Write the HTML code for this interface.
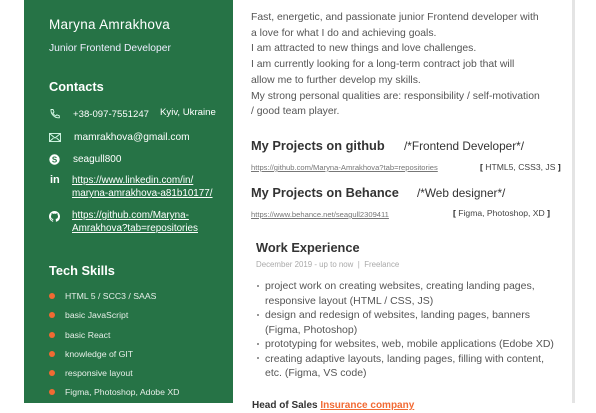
<!DOCTYPE html>
<html><head><meta charset="utf-8"><style>
*{margin:0;padding:0;box-sizing:border-box}
body{width:596px;height:403px;overflow:hidden;background:#fff;font-family:"Liberation Sans",sans-serif;position:relative}
.t{position:absolute;white-space:nowrap;line-height:14px}
.side{position:absolute;left:24px;top:0;width:209px;height:403px;background:#267346}
.w{color:#fff}
.g{color:#555;font-size:10.4px}
.dot{position:absolute;width:6px;height:6px;border-radius:50%;background:#f26a33}
.li{color:#e8efe9;font-size:8.7px}
.h{font-weight:bold;color:#333;font-size:12.8px}
.lk{font-size:7.6px;color:#777;text-decoration:underline}
.br{font-size:8.6px;color:#444}
.br b{color:#222}
.bul{color:#555;font-size:10.5px}
.bd{position:absolute;width:2px;height:2px;background:#777;border-radius:50%}
</style></head><body>
<div class="side"></div>
<div style="position:absolute;left:572px;top:0;width:3px;height:403px;background:#e4e4e4"></div>

<div class="t w" style="left:49px;top:18px;font-size:13.5px;letter-spacing:.3px">Maryna Amrakhova</div>
<div class="t w" style="left:49px;top:42px;font-size:10.3px;color:#eef">Junior Frontend Developer</div>
<div class="t w" style="left:49px;top:80px;font-size:12.8px;font-weight:bold">Contacts</div>

<svg style="position:absolute;left:49px;top:108px" width="12" height="12" viewBox="0 0 12 12" fill="none" stroke="#dfe" stroke-width="0.9"><path d="M2 1.5l2 0 1 2.5-1.2 1c.7 1.4 1.6 2.3 3 3l1-1.2 2.5 1v2c-4.5.5-8.8-3.8-8.3-8.3z"/></svg>
<div class="t w" style="left:73px;top:108px;font-size:9.6px">+38-097-7551247</div>
<div class="t w" style="left:160px;top:106px;font-size:9.6px">Kyiv, Ukraine</div>

<svg style="position:absolute;left:49px;top:133px" width="12" height="9" viewBox="0 0 12 9" fill="none" stroke="#dfe" stroke-width="0.9"><rect x="0.5" y="0.5" width="11" height="8"/><path d="M.5 .5l5.5 4.5 5.5-4.5M.5 8.5l4-3.5M11.5 8.5l-4-3.5"/></svg>
<div class="t w" style="left:74px;top:131px;font-size:10.2px">mamrakhova@gmail.com</div>

<svg style="position:absolute;left:49px;top:154px" width="11" height="11" viewBox="0 0 11 11"><circle cx="5.5" cy="5.5" r="5.2" fill="#fff"/><text x="5.5" y="8.3" font-size="8" font-weight="bold" fill="#267346" text-anchor="middle" font-family="Liberation Sans">S</text></svg>
<div class="t w" style="left:73px;top:153px;font-size:10px">seagull800</div>

<div class="t w" style="left:50px;top:173px;font-size:11px;font-weight:bold">in</div>
<div class="t w" style="left:72px;top:174px;font-size:9.9px;text-decoration:underline;line-height:13px">https://www.linkedin.com/in/<br>maryna-amrakhova-a81b10177/</div>

<svg style="position:absolute;left:49px;top:211px" width="11" height="11" viewBox="0 0 16 16"><path fill="#fff" d="M8 0C3.580 0 0 3.58 0 8c0 3.54 2.29 6.53 5.47 7.59.4.07.55-.17.55-.38v-1.33c-2.23.48-2.7-1.07-2.7-1.07-.36-.92-.89-1.170-.89-1.17-.73-.5.06-.49.06-.49.8.06 1.23.83 1.23.83.71 1.23 1.87.87 2.33.66.07-.52.28-.87.5-1.07-1.78-.2-3.64-.89-3.64-3.95 0-.87.31-1.59.82-2.15-.08-.2-.36-1.02.08-2.12 0 0 .67-.21 2.2.82a7.6 7.6 0 014 0c1.53-1.04 2.2-.82 2.2-.82.44 1.1.16 1.92.08 2.12.51.56.82 1.27.82 2.15 0 3.07-1.870 3.75-3.65 3.95.29.25.54.73.54 1.48v2.2c0 .21.15.46.55.38A8 8 0 0016 8c0-4.42-3.58-8-8-8z"/></svg>
<div class="t w" style="left:72px;top:209px;font-size:9.9px;text-decoration:underline;line-height:13px">https://github.com/Maryna-<br>Amrakhova?tab=repositories</div>

<div class="t w" style="left:49px;top:264px;font-size:12.8px;font-weight:bold">Tech Skills</div>
<div class="dot" style="left:49px;top:293px"></div><div class="t li" style="left:65px;top:289px">HTML 5 / SCC3 / SAAS</div>
<div class="dot" style="left:49px;top:312px"></div><div class="t li" style="left:65px;top:308px">basic JavaScript</div>
<div class="dot" style="left:49px;top:332px"></div><div class="t li" style="left:65px;top:328px">basic React</div>
<div class="dot" style="left:49px;top:351px"></div><div class="t li" style="left:65px;top:347px">knowledge of GIT</div>
<div class="dot" style="left:49px;top:370px"></div><div class="t li" style="left:65px;top:366px">responsive layout</div>
<div class="dot" style="left:49px;top:389px"></div><div class="t li" style="left:65px;top:385px">Figma, Photoshop, Adobe XD</div>

<div class="t g" style="left:251px;top:10px;line-height:15.7px">Fast, energetic, and passionate junior Frontend developer with<br>a love for what I do and achieving goals.<br>I am attracted to new things and love challenges.<br>I am currently looking for a long-term contract job that will<br>allow me to further develop my skills.<br>My strong personal qualities are: responsibility / self-motivation<br>/ good team player.</div>

<div class="t h" style="left:251px;top:139px">My Projects on github</div>
<div class="t" style="left:404px;top:139px;font-size:11.8px;color:#333">/*Frontend Developer*/</div>
<div class="t lk" style="left:251px;top:161px">https://github.com/Maryna-Amrakhova?tab=repositories</div>
<div class="t br" style="left:480px;top:160px"><b>[</b> HTML5, CSS3, JS <b>]</b></div>

<div class="t h" style="left:251px;top:186px">My Projects on Behance</div>
<div class="t" style="left:417px;top:186px;font-size:11.8px;color:#333">/*Web designer*/</div>
<div class="t lk" style="left:251px;top:208px">https://www.behance.net/seagull2309411</div>
<div class="t br" style="left:453px;top:206px"><b>[</b> Figma, Photoshop, XD <b>]</b></div>

<div class="t h" style="left:256px;top:241px">Work Experience</div>
<div class="t" style="left:256px;top:258px;font-size:7.9px;color:#aaa">December 2019 - up to now &nbsp;| &nbsp;Freelance</div>

<div class="bd" style="left:257px;top:285px"></div>
<div class="bd" style="left:257px;top:314px"></div>
<div class="bd" style="left:257px;top:343px"></div>
<div class="bd" style="left:257px;top:357px"></div>
<div class="t bul" style="left:265px;top:279px;line-height:14.5px">project work on creating websites, creating landing pages,<br>responsive layout (HTML / CSS, JS)<br>design and redesign of websites, landing pages, banners<br>(Figma, Photoshop)<br>prototyping for websites, web, mobile applications (Edobe XD)<br>creating adaptive layouts, landing pages, filling with content,<br>etc. (Figma, VS code)</div>

<div class="t" style="left:252px;top:399px;font-size:10px;font-weight:bold;color:#333">Head of Sales <span style="color:#f26a33;text-decoration:underline">Insurance company</span></div>
</body></html>
